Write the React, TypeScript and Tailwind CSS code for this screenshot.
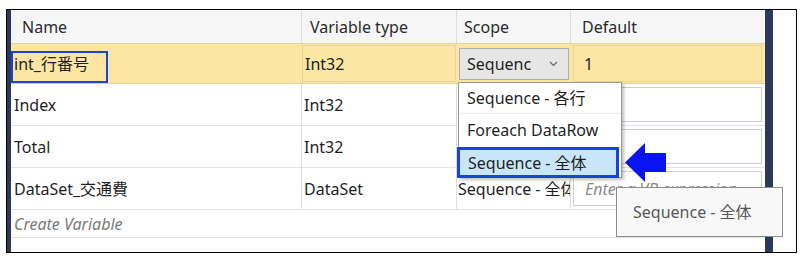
import React from 'react'

const font = "font-['Noto_Sans','Noto_Sans_CJK_JP',sans-serif]"

interface Row {
  name: string
  type: string
  scope?: string
}

const rows: Row[] = [
  { name: 'Index', type: 'Int32' },
  { name: 'Total', type: 'Int32' },
  { name: 'DataSet_交通費', type: 'DataSet', scope: 'Sequence - 全体' },
]

function DefaultBox({ placeholder }: { placeholder?: string }) {
  return (
    <div className="flex h-full items-center py-[3px] pl-[2px] pr-[3px]">
      <div className="flex h-full w-full items-center overflow-hidden whitespace-nowrap border border-[#c9cfd8] bg-white pl-[11px] text-[16px] italic text-[#8a8a8a]">
        {placeholder}
      </div>
    </div>
  )
}

export default function App() {
  return (
    <div className={`relative h-[262px] w-[806px] bg-white text-[#1f1f1f] ${font}`}>
      <div className="ml-[6px] pt-[9px]">
        <div className="flex h-[244px] w-[791px] border border-black">
          <div className="w-[4px] bg-[#2c3a5a]" />

          <div className="flex w-[754px] flex-col">
            {/* header */}
            <div className="grid h-[33px] grid-cols-[290px_155px_114px_195px] bg-[#f6f6f7] text-[16px] text-[#2b2b2b]">
              <div className="flex items-center pl-[11px]">Name</div>
              <div className="flex items-center border-l border-[#dcdde0] pl-[8px]">Variable type</div>
              <div className="flex items-center border-l border-[#dcdde0] pl-[7px]">Scope</div>
              <div className="flex items-center border-l border-[#dcdde0] pl-[11px]">Default</div>
            </div>

            {/* selected row */}
            <div className="grid h-[41px] grid-cols-[290px_155px_114px_195px] border-y border-[#e6d496] bg-[#fde5a4] text-[16px]">
              <div className="flex items-center pl-[3px]">int_行番号</div>
              <div className="flex items-center py-[1px] pl-[1px]">
                <div className="flex h-full w-full items-center border border-[#e8d49c] pl-[2px]">Int32</div>
              </div>
              <div className="flex items-center pl-[3px] pr-[1px]">
                <div className="flex h-[32px] w-full items-center justify-between border border-[#adadad] bg-[#e6e6e6] pl-[7px] pr-[10px]">
                  <span>Sequenc</span>
                  <svg width="9" height="6" viewBox="0 0 9 6" fill="none" stroke="#666" strokeWidth="1.2">
                    <path d="M1 1l3.5 3.5L8 1" />
                  </svg>
                </div>
              </div>
              <div className="flex items-center py-[1px] pl-[3px] pr-[3px]">
                <div className="flex h-full w-full items-center border border-[#e8d49c] pl-[10px]">1</div>
              </div>
            </div>

            {rows.map((r) => (
              <div
                key={r.name}
                className="grid h-[42px] grid-cols-[290px_155px_114px_195px] border-b border-[#e1e2e5] text-[16px]"
              >
                <div className="flex items-center pl-[3px]">{r.name}</div>
                <div className="flex items-center border-l border-[#dcdde0] pl-[2px]">{r.type}</div>
                <div className="flex items-center overflow-hidden whitespace-nowrap border-l border-[#dcdde0] pl-[1px]">
                  {r.scope}
                </div>
                <div className="border-l border-[#dcdde0]">
                  <DefaultBox placeholder={r.scope ? 'Enter a VB expression' : undefined} />
                </div>
              </div>
            ))}

            <div className="flex h-[28px] items-center border-b border-[#e1e2e5] pl-[3px] text-[16px] italic text-[#7a7a7a]">
              Create Variable
            </div>
          </div>

          <div className="w-[8px] bg-[#2c3a5a]" />
          <div className="flex-1 bg-white" />
        </div>
      </div>

      {/* annotation box on name */}
      <div className="absolute left-[11px] top-[51px] h-[32px] w-[97px] border-2 border-[#1a44d8]" />

      {/* dropdown popup */}
      <div className="absolute left-[458px] top-[82px] flex h-[96px] w-[164px] flex-col border border-[#9a9a9a] bg-white text-[16px] shadow-[2px_2px_3px_rgba(0,0,0,0.25)]">
        <div className="flex h-[31px] items-center border-b border-[#ececec] pl-[8px]">Sequence - 各行</div>
        <div className="flex h-[31px] items-center pl-[8px]">Foreach DataRow</div>
      </div>
      <div className="absolute left-[457px] top-[147px] flex h-[31px] w-[162px] items-center border-[3px] border-[#1a44d8] bg-[#c9e6f8] pl-[8px] text-[16px]">
        Sequence - 全体
      </div>

      {/* arrow */}
      <svg className="absolute left-[625px] top-[143px]" width="42" height="39" viewBox="0 0 42 39">
        <polygon points="0,19.5 20,0 20,10 41,10 41,29 20,29 20,39" fill="#0a14f0" />
      </svg>

      {/* tooltip */}
      <div className="absolute left-[616px] top-[187px] flex h-[50px] w-[167px] items-center border border-[#8c8c8c] bg-[#f8f8f8] pl-[16px] text-[16px] text-[#575757]">
        Sequence - 全体
      </div>
    </div>
  )
}
